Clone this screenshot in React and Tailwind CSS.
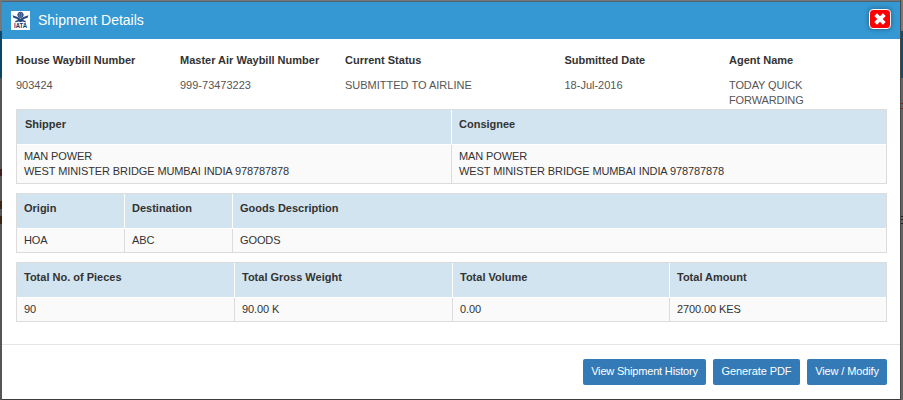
import React from "react";

const summary = [
  { w: "w-[164px]", label: "House Waybill Number", value: "903424" },
  { w: "w-[165px]", label: "Master Air Waybill Number", value: "999-73473223" },
  { w: "w-[219.5px]", label: "Current Status", value: "SUBMITTED TO AIRLINE" },
  { w: "w-[164.5px]", label: "Submitted Date", value: "18-Jul-2016" },
  { w: "w-[110px]", label: "Agent Name", value: "TODAY QUICK FORWARDING", ls: "tracking-[-0.12px]" },
];

const address = "MAN POWER\nWEST MINISTER BRIDGE MUMBAI INDIA 978787878";

const tables = [
  {
    cols: "grid-cols-[434px_1fr]",
    body: "h-[38px]",
    firstHead: "pl-[8px]",
    cells: [["Shipper", address], ["Consignee", address]],
  },
  {
    cols: "grid-cols-[107px_108px_1fr]",
    body: "h-[23px]",
    firstHead: "pl-[7px]",
    cells: [["Origin", "HOA"], ["Destination", "ABC"], ["Goods Description", "GOODS"]],
  },
  {
    cols: "grid-cols-[217px_218px_217px_1fr]",
    body: "h-[23px]",
    firstHead: "pl-[7px]",
    cells: [
      ["Total No. of Pieces", "90"],
      ["Total Gross Weight", "90.00 K"],
      ["Total Volume", "0.00"],
      ["Total Amount", "2700.00 KES"],
    ],
  },
];

function Logo() {
  return (
    <svg className="h-[19px] w-[19px] bg-white" viewBox="0 0 19 19" fill="none">
      <path d="M1.500 4.300 6.500 6l3 1.800L12.500 6l5-1.700-1 2.500-3.600 1.300-.8 1 2.600.9v1.500l-3.200-1-2 .7-2-.7-3.200 1V10l2.600-.9-.8-1-3.600-1.300Z" fill="#27477f" />
      <circle cx="9.500" cy="3.900" r="2.700" fill="#6681aa" stroke="#1c3f78" strokeWidth=".9" />
      <path d="M7 3.900h5M9.500 1.500v5" stroke="#27477f" strokeWidth=".5" />
      <text x="9.500" y="17.200" textAnchor="middle" textLength="13" lengthAdjust="spacingAndGlyphs" fontSize="7.500" fontWeight="700" fill="#19336b" className="font-['Liberation_Sans',sans-serif]">IATA</text>
    </svg>
  );
}

function DataTable({ cols, body, firstHead, cells }) {
  return (
    <div className={`grid border border-[#dcdcdc] ${cols}`}>
      {cells.map(([head, value], i) => (
        <div key={head} className="flex flex-col">
          <div className={`h-[34px] bg-[#d2e4ef] pt-[7px] leading-[15px] font-bold ${i ? "border-l border-white pl-[7px]" : firstHead}`}>{head}</div>
          <div className={`mt-px whitespace-pre-line bg-[#fafafa] pt-[4px] leading-[15px] tracking-[-0.1px] ${body} ${i ? "border-l border-[#dcdcdc] pl-[7px]" : "pl-[7px]"}`}>{value}</div>
        </div>
      ))}
    </div>
  );
}

export default function App() {
  return (
    <div className="flex h-[400px] w-[903px] overflow-hidden bg-[#555] font-['Liberation_Sans',Arial,sans-serif] text-[11px] text-[#333]">
      <aside className="flex w-[2px] shrink-0 flex-col bg-[#555]">
        <div className="h-[31px] bg-[#777]" />
        <div className="h-[47px] bg-[#0c4667]" />
        <div className="mt-[91px] h-[7px] bg-[#451c1c]" />
        <div className="mt-[25px] h-[8px] bg-[#3d2415]" />
        <div className="mt-[7px] h-[8px] bg-[#3d2415]" />
      </aside>
      <div className="flex w-[898px] shrink-0 flex-col">
        <div className="h-px bg-[#777]" />
        <div className="h-px bg-[#4f6472]" />
        <div className="flex h-[397px] flex-col bg-white">
          <header className="flex h-[37px] items-center bg-[#3598d2] pl-[9px] pr-[9px] text-white">
            <Logo />
            <h1 className="ml-[8px] text-[14px]">Shipment Details</h1>
            <button className="mb-[3px] ml-auto flex h-[20px] w-[22px] items-center justify-center rounded-[4px] border border-white bg-[#f00] shadow-[0_0_5px_rgba(0,0,0,0.4)]">
              <svg className="h-[12px] w-[12px]" viewBox="0 0 12 12"><path d="M1.700 1.700l8.600 8.600M10.300 1.700l-8.600 8.600" stroke="#fff" strokeWidth="3.800" /></svg>
            </button>
          </header>
          <main className="h-[305px] px-[14px] pt-[14px]">
            <section className="flex h-[56px]">
              {summary.map((s) => (
                <div key={s.label} className={`shrink-0 leading-[15px] ${s.w}`}>
                  <div className="whitespace-nowrap font-bold">{s.label}</div>
                  <div className={`mt-[10px] text-[#555] ${s.ls || ""}`}>{s.value}</div>
                </div>
              ))}
            </section>
            <section className="flex w-[871px] flex-col gap-[9px]">
              {tables.map((t) => <DataTable key={t.cols} {...t} />)}
            </section>
          </main>
          <footer className="flex flex-1 justify-end gap-[7px] border-t border-[#e5e5e5] pt-[14px] pr-[13px] text-white">
            <button className="h-[26px] w-[123px] rounded-[2px] bg-[#337ab7] pb-[2px] tracking-[-0.18px]">View Shipment History</button>
            <button className="h-[26px] w-[87px] rounded-[2px] bg-[#337ab7] pb-[2px] tracking-[-0.08px]">Generate PDF</button>
            <button className="h-[26px] w-[80px] rounded-[2px] bg-[#337ab7] pb-[2px] tracking-[-0.12px]">View / Modify</button>
          </footer>
        </div>
        <div className="h-px bg-[#3c3c3c]" />
      </div>
      <aside className="flex w-[3px] shrink-0 flex-col border-l border-[#484848] bg-[#646464]">
        <div className="h-[31px] bg-[#7a7a7a]" />
        <div className="h-[47px] bg-[#0f4d70]" />
        <div className="mt-[25px] h-[6px] border-y border-[#8c1a1a]" />
        <div className="mt-[107px] h-[4px] border-y border-[#222]" />
        <div className="h-[4px] border-b border-[#222]" />
      </aside>
    </div>
  );
}
